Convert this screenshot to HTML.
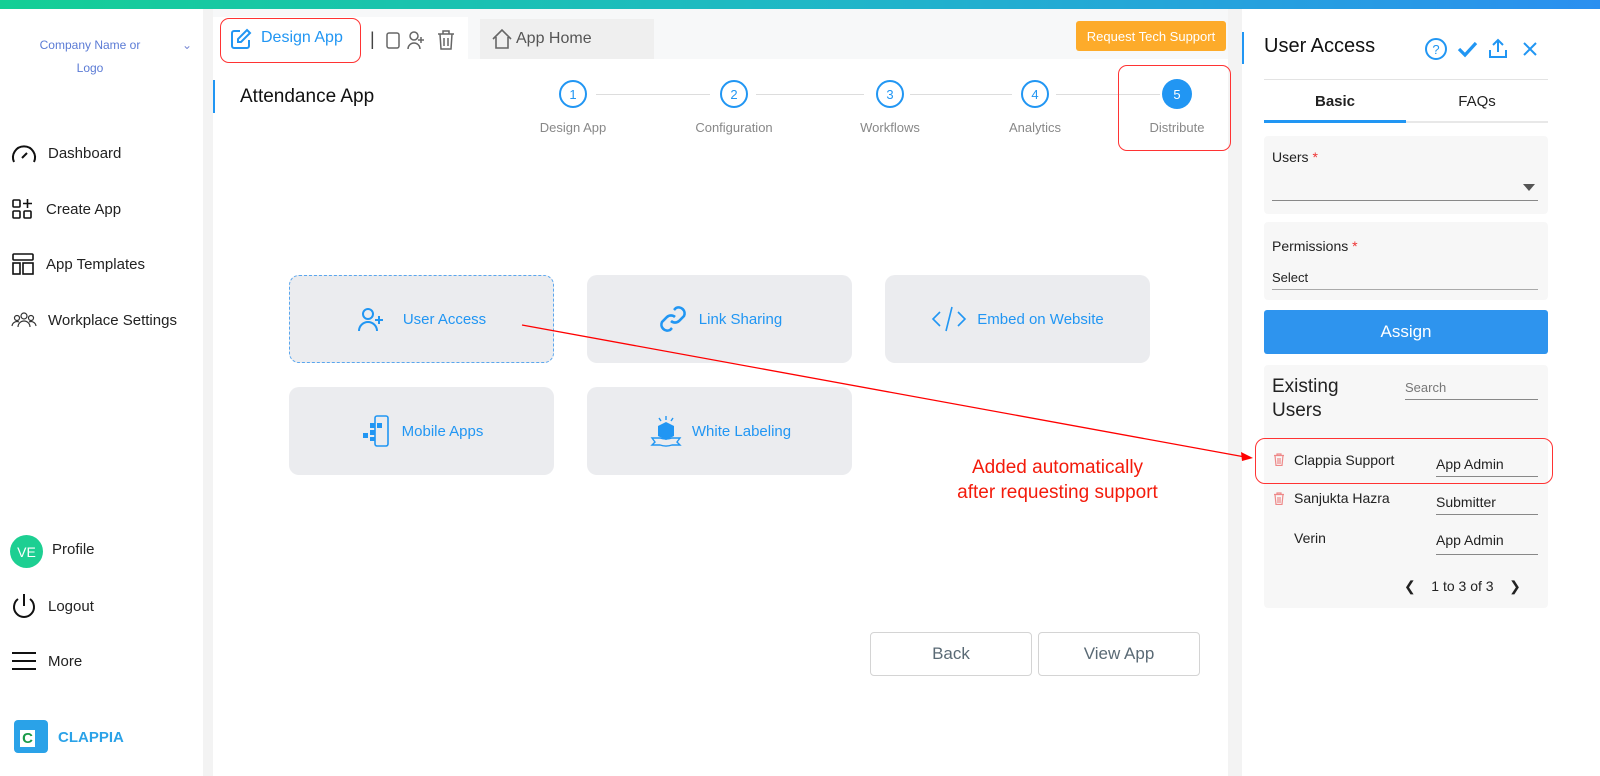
<!DOCTYPE html>
<html><head><meta charset="utf-8"><style>
*{box-sizing:border-box;margin:0;padding:0}
body{width:1600px;height:776px;position:relative;overflow:hidden;background:#f3f3f3;font-family:"Liberation Sans",Arial,sans-serif;color:#222}
.a{position:absolute}
.top{left:0;top:0;width:1600px;height:9px;background:linear-gradient(90deg,#14cf95,#1fb8c6 50%,#2b8ff0)}
.side{left:0;top:9px;width:203px;height:767px;background:#fff}
.nav{left:10px;font-size:15px;color:#222;display:flex;align-items:center;gap:10px}
.main{left:213px;top:9px;width:1015px;height:767px;background:#fff}
.right{left:1242px;top:9px;width:358px;height:767px;background:#fff}
.card{background:#ebecef;border-radius:10px;width:265px;height:88px;display:flex;align-items:center;justify-content:center;gap:10px;color:#2196f3;font-size:15px}
.step{width:28px;height:28px;border:2px solid #2196f3;border-radius:50%;color:#2196f3;font-size:13px;display:flex;align-items:center;justify-content:center;background:#fff}
.sl{font-size:13px;color:#888;text-align:center;width:120px}
.line{height:1px;background:#ddd;top:94px}
.btn{border:1px solid #d4d4d4;border-radius:4px;width:162px;height:44px;display:flex;align-items:center;justify-content:center;font-size:17px;color:#5a6a75}
.box{background:#f7f7f7;border-radius:4px}
.ul{border-bottom:1px solid #888}
</style></head><body>
<div class="a top"></div>
<div class="a side"></div>
<div class="a main"></div>
<div class="a right"></div>
<!-- sidebar -->
<div class="a" style="left:30px;top:34px;width:120px;text-align:center;font-size:12px;color:#5b7bd5;line-height:23px">Company Name or<br>Logo</div>
<div class="a" style="left:182px;top:38px;font-size:12px;color:#7a8ad5">&#8964;</div>
<div class="a nav" style="top:142px"><svg width="28" height="22" viewBox="0 0 28 22"><path d="M4 20A11 11 0 1 1 24 20" fill="none" stroke="#111" stroke-width="2"/><path d="M12 16L17 11" stroke="#111" stroke-width="2"/></svg>Dashboard</div>
<div class="a nav" style="top:198px"><svg width="26" height="22" viewBox="0 0 26 22"><rect x="3" y="2" width="7" height="7" rx="1" fill="none" stroke="#111" stroke-width="1.6"/><rect x="3" y="13" width="7" height="7" rx="1" fill="none" stroke="#111" stroke-width="1.6"/><rect x="14" y="13" width="7" height="7" rx="1" fill="none" stroke="#111" stroke-width="1.6"/><path d="M17.5 1v9M13 5.5h9" stroke="#111" stroke-width="1.6"/></svg>Create App</div>
<div class="a nav" style="top:253px"><svg width="26" height="22" viewBox="0 0 26 22"><rect x="3" y="1" width="20" height="6" rx="1" fill="none" stroke="#111" stroke-width="1.6"/><rect x="3" y="10" width="7" height="11" fill="none" stroke="#111" stroke-width="1.6"/><rect x="13" y="10" width="10" height="11" fill="none" stroke="#111" stroke-width="1.6"/></svg>App Templates</div>
<div class="a nav" style="top:309px"><svg width="28" height="22" viewBox="0 0 28 22"><circle cx="14" cy="7" r="3" fill="none" stroke="#333" stroke-width="1.2"/><circle cx="7" cy="9" r="2.5" fill="none" stroke="#333" stroke-width="1.2"/><circle cx="21" cy="9" r="2.5" fill="none" stroke="#333" stroke-width="1.2"/><path d="M8 18a6 6 0 0 1 12 0M2 17a5 5 0 0 1 7-4M26 17a5 5 0 0 0-7-4" fill="none" stroke="#333" stroke-width="1.2"/></svg>Workplace Settings</div>
<div class="a" style="left:10px;top:535px;width:33px;height:33px;border-radius:50%;background:#1dcf92;color:#fff;font-size:14px;display:flex;align-items:center;justify-content:center">VE</div>
<div class="a" style="left:52px;top:541px;font-size:15px">Profile</div>
<div class="a nav" style="top:593px"><svg width="28" height="26" viewBox="0 0 28 26"><path d="M8 6A10 10 0 1 0 20 6" fill="none" stroke="#111" stroke-width="2"/><path d="M14 1v12" stroke="#111" stroke-width="2"/></svg>Logout</div>
<div class="a nav" style="top:650px"><svg width="28" height="22" viewBox="0 0 28 22"><path d="M2 3h24M2 11h24M2 19h24" stroke="#111" stroke-width="2"/></svg>More</div>
<div class="a" style="left:14px;top:720px;width:34px;height:33px;border-radius:4px;background:#2aa2e8"></div>
<div class="a" style="left:19px;top:729px;width:17px;height:19px;background:#fff;border:1px solid #2aa2e8;color:#1a9a48;font-weight:bold;font-size:15px;line-height:17px;text-align:center">C</div>
<div class="a" style="left:58px;top:729px;font-size:15px;font-weight:bold;color:#2aa2e8">CLAPPIA</div>
<!-- main top bar -->
<div class="a" style="left:213px;top:9px;width:1015px;height:50px;background:#f7f8f9"></div>
<div class="a" style="left:213px;top:17px;width:255px;height:42px;background:#fff"></div>
<div class="a" style="left:220px;top:18px;width:141px;height:45px;border:1.5px solid #f33;border-radius:9px"></div>
<svg class="a" style="left:230px;top:28px" width="22" height="22" viewBox="0 0 22 22"><path d="M10 3H4a2 2 0 0 0-2 2v13a2 2 0 0 0 2 2h13a2 2 0 0 0 2-2v-6" fill="none" stroke="#2196f3" stroke-width="2"/><path d="M17 2l3 3-9 9H8v-3z" fill="none" stroke="#2196f3" stroke-width="2"/></svg>
<div class="a" style="left:261px;top:29px;font-size:16px;color:#2196f3">Design App</div>
<div class="a" style="left:370px;top:29px;font-size:18px;color:#444">|</div>
<svg class="a" style="left:383px;top:29px;width:80px;height:22px" viewBox="0 0 80 22"><rect x="4" y="4" width="12" height="15" rx="2" fill="none" stroke="#666" stroke-width="1.5"/><circle cx="31" cy="7" r="4" fill="none" stroke="#666" stroke-width="1.5"/><path d="M25 20a6 6 0 0 1 12 0M38 8v6M35 11h6" fill="none" stroke="#666" stroke-width="1.5"/><path d="M55 5h16M60 5V2h6v3M57 5l1 15h10l1-15M61 9v8M65 9v8" fill="none" stroke="#666" stroke-width="1.5"/></svg>
<div class="a" style="left:480px;top:19px;width:174px;height:40px;background:#efefef"></div>
<svg class="a" style="left:491px;top:28px" width="22" height="22" viewBox="0 0 22 22"><path d="M2 11L11 2l9 9M5 9v11h12V9" fill="none" stroke="#666" stroke-width="1.6"/></svg>
<div class="a" style="left:516px;top:30px;font-size:16px;color:#555">App Home</div>
<div class="a" style="left:1076px;top:21px;width:150px;height:30px;background:#fdab2a;border-radius:3px;color:#fff;font-size:13px;display:flex;align-items:center;justify-content:center">Request Tech Support</div>
<div class="a" style="left:213px;top:80px;width:2px;height:33px;background:#2196f3"></div>
<div class="a" style="left:240px;top:86px;font-size:19px;color:#111">Attendance App</div>
<!-- stepper -->
<div class="a line" style="left:596px;width:114px"></div>
<div class="a line" style="left:756px;width:108px"></div>
<div class="a line" style="left:910px;width:102px"></div>
<div class="a line" style="left:1056px;width:104px"></div>
<div class="a step" style="left:559px;top:80px">1</div>
<div class="a step" style="left:720px;top:80px">2</div>
<div class="a step" style="left:876px;top:80px">3</div>
<div class="a step" style="left:1021px;top:80px">4</div>
<div class="a step" style="left:1162px;top:79px;width:30px;height:30px;background:#2196f3;color:#fff;border:none">5</div>
<div class="a sl" style="left:513px;top:120px">Design App</div>
<div class="a sl" style="left:674px;top:120px">Configuration</div>
<div class="a sl" style="left:830px;top:120px">Workflows</div>
<div class="a sl" style="left:975px;top:120px">Analytics</div>
<div class="a sl" style="left:1117px;top:120px">Distribute</div>
<div class="a" style="left:1118px;top:65px;width:113px;height:86px;border:1.5px solid #f33;border-radius:9px"></div>
<!-- cards -->
<div class="a card" style="left:289px;top:275px;border:1px dashed #5aa6ee"><svg width="28" height="26" viewBox="0 0 28 26"><circle cx="11" cy="8" r="5" fill="none" stroke="#2196f3" stroke-width="2"/><path d="M2 25a9 9 0 0 1 18 0M22 10v8M18 14h8" fill="none" stroke="#2196f3" stroke-width="2"/></svg><span style="margin-left:8px">User Access</span></div>
<div class="a card" style="left:587px;top:275px"><svg width="32" height="32" viewBox="0 0 32 32"><path d="M14 18a6 6 0 0 0 8 0l5-5a6 6 0 0 0-8-8l-2 2M18 14a6 6 0 0 0-8 0l-5 5a6 6 0 0 0 8 8l2-2" fill="none" stroke="#2196f3" stroke-width="2.6"/></svg>Link Sharing</div>
<div class="a card" style="left:885px;top:275px"><svg width="36" height="28" viewBox="0 0 36 28"><path d="M9 7L2 14l7 7M27 7l7 7-7 7M21 2l-6 24" fill="none" stroke="#2196f3" stroke-width="1.6"/></svg>Embed on Website</div>
<div class="a card" style="left:289px;top:387px"><svg width="32" height="34" viewBox="0 0 32 34"><rect x="15" y="2" width="13" height="30" rx="2" fill="none" stroke="#2196f3" stroke-width="1.6"/><rect x="10" y="9" width="5" height="5" fill="#2196f3"/><rect x="17" y="9" width="5" height="5" fill="#2196f3"/><rect x="10" y="16" width="5" height="5" fill="#2196f3"/><rect x="3" y="19" width="5" height="5" fill="#2196f3"/><rect x="10" y="23" width="5" height="4" fill="#2196f3"/></svg>Mobile Apps</div>
<div class="a card" style="left:587px;top:387px"><svg width="34" height="34" viewBox="0 0 34 34"><path d="M10 12l8-4 8 4v10l-8 4-8-4z" fill="#2196f3"/><path d="M18 2v4M11 4l2 3M25 4l-2 3M4 24h8a10 5 0 0 0 12 0h8l-3 4 3 3h-8a10 5 0 0 1-12 0H4l3-3z" fill="none" stroke="#2196f3" stroke-width="1.4"/></svg>White Labeling</div>
<!-- annotation -->
<svg class="a" style="left:0;top:0" width="1600" height="776"><path d="M522 325L1245 457" stroke="#f00" stroke-width="1.3"/><path d="M1253 458l-12-6 1 9z" fill="#f00"/></svg>
<div class="a" style="left:920px;top:455px;width:275px;text-align:center;font-size:19px;color:#f31b0b;line-height:25px">Added automatically<br>after requesting support</div>
<div class="a btn" style="left:870px;top:632px">Back</div>
<div class="a btn" style="left:1038px;top:632px">View App</div>
<!-- right panel -->
<div class="a" style="left:1242px;top:32px;width:2px;height:32px;background:#2196f3"></div>
<div class="a" style="left:1264px;top:35px;font-size:20px;color:#111">User Access</div>
<svg class="a" style="left:1424px;top:36px" width="120" height="26" viewBox="0 0 120 26"><circle cx="12" cy="13" r="10" fill="none" stroke="#2196f3" stroke-width="2"/><text x="12" y="18" font-size="13" text-anchor="middle" fill="#2196f3" font-family="Liberation Sans">?</text><path d="M35 13l6 6 11-12" fill="none" stroke="#2196f3" stroke-width="3.2"/><path d="M66 14v7h16v-7M74 4v12M69 9l5-5 5 5" fill="none" stroke="#2196f3" stroke-width="2"/><path d="M100 7l12 12M112 7l-12 12" stroke="#2196f3" stroke-width="2"/></svg>
<div class="a" style="left:1264px;top:79px;width:284px;height:1px;background:#e3e3e3"></div>
<div class="a" style="left:1264px;top:93px;width:142px;text-align:center;font-size:15px;font-weight:bold">Basic</div>
<div class="a" style="left:1406px;top:93px;width:142px;text-align:center;font-size:15px">FAQs</div>
<div class="a" style="left:1264px;top:121px;width:284px;height:2px;background:#e8e8e8"></div>
<div class="a" style="left:1264px;top:120px;width:142px;height:3px;background:#2196f3"></div>
<div class="a box" style="left:1264px;top:136px;width:284px;height:78px"></div>
<div class="a" style="left:1272px;top:149px;font-size:14px">Users <span style="color:#e33">*</span></div>
<div class="a" style="left:1523px;top:184px;width:0;height:0;border-left:6px solid transparent;border-right:6px solid transparent;border-top:7px solid #555"></div>
<div class="a ul" style="left:1272px;top:200px;width:266px"></div>
<div class="a box" style="left:1264px;top:222px;width:284px;height:78px"></div>
<div class="a" style="left:1272px;top:238px;font-size:14px">Permissions <span style="color:#e33">*</span></div>
<div class="a" style="left:1272px;top:270px;font-size:13px">Select</div>
<div class="a ul" style="left:1272px;top:289px;width:266px;border-color:#aaa"></div>
<div class="a" style="left:1264px;top:310px;width:284px;height:44px;background:#2e94ee;border-radius:3px;color:#fff;font-size:17px;display:flex;align-items:center;justify-content:center">Assign</div>
<div class="a box" style="left:1264px;top:365px;width:284px;height:243px"></div>
<div class="a" style="left:1272px;top:375px;font-size:19px;line-height:24px">Existing<br>Users</div>
<div class="a" style="left:1405px;top:380px;font-size:13px;color:#777">Search</div>
<div class="a ul" style="left:1405px;top:399px;width:133px"></div>
<div class="a" style="left:1255px;top:438px;width:298px;height:46px;border:1.5px solid #f33;border-radius:10px"></div>
<svg class="a" style="left:1273px;top:453px" width="12" height="13" viewBox="0 0 12 13"><path d="M1 2.5h10M4 2.5V1h4v1.5M2 2.5l1 10h6l1-10M5 5v6M7 5v6" fill="none" stroke="#ee8888" stroke-width="1.2"/></svg>
<div class="a" style="left:1294px;top:452px;font-size:14px">Clappia Support</div>
<div class="a" style="left:1436px;top:456px;font-size:14px">App Admin</div>
<div class="a ul" style="left:1436px;top:476px;width:102px"></div>
<svg class="a" style="left:1273px;top:492px" width="12" height="13" viewBox="0 0 12 13"><path d="M1 2.5h10M4 2.5V1h4v1.5M2 2.5l1 10h6l1-10M5 5v6M7 5v6" fill="none" stroke="#ee8888" stroke-width="1.2"/></svg>
<div class="a" style="left:1294px;top:490px;font-size:14px">Sanjukta Hazra</div>
<div class="a" style="left:1436px;top:494px;font-size:14px">Submitter</div>
<div class="a ul" style="left:1436px;top:514px;width:102px"></div>
<div class="a" style="left:1294px;top:530px;font-size:14px">Verin</div>
<div class="a" style="left:1436px;top:532px;font-size:14px">App Admin</div>
<div class="a ul" style="left:1436px;top:554px;width:102px"></div>
<div class="a" style="left:1404px;top:578px;font-size:14px">&#10094;&nbsp;&nbsp;&nbsp;&nbsp;1 to 3 of 3&nbsp;&nbsp;&nbsp;&nbsp;&#10095;</div>
</body></html>
